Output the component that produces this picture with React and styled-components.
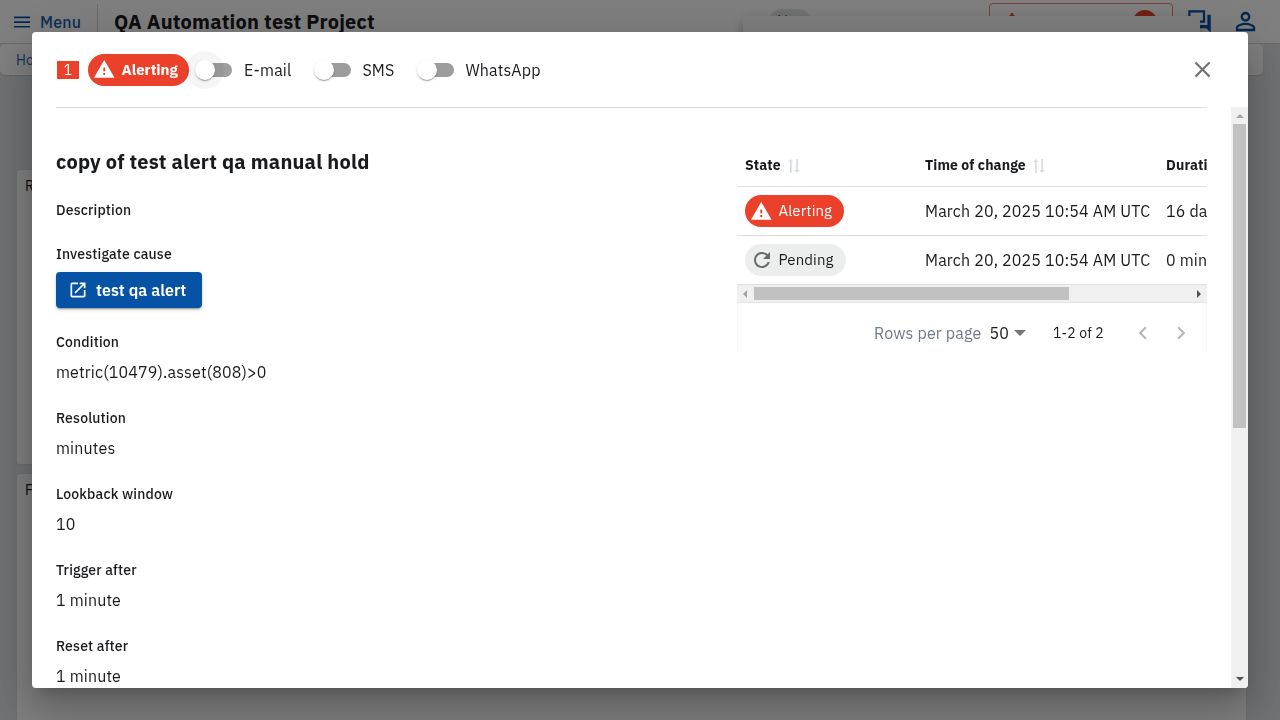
import React from "react";
import styled, { createGlobalStyle, css } from "styled-components";

const GlobalStyle = createGlobalStyle`
  *, *::before, *::after { box-sizing: border-box; }
  html, body { margin: 0; height: 100%; overflow: hidden; }
  body {
    font-family: "IBM Plex Sans", "Noto Sans", sans-serif;
    font-size: 16px;
    color: #191b1e;
    background: #dfe2e5;
  }
`;

const BLUE = "#0653a6";
const RED = "#eb412b";

const Text = styled.span`
  display: inline-block;
  white-space: nowrap;
  font-size: ${(p) => p.$size || 16}px;
  font-weight: ${(p) => p.$weight || 400};
  letter-spacing: ${(p) => p.$track ?? 0.15}px;
  line-height: 24px;
  color: ${(p) => p.$color || "inherit"};
`;

/* ---------- page behind the dialog ---------- */

const Page = styled.div`
  height: 720px;
  overflow: hidden;
`;

const TopBar = styled.header`
  display: flex;
  align-items: center;
  height: 44px;
  padding: 0 20px 0 14px;
  background: #fff;
  border-bottom: 1px solid #d4d7da;
`;

const MenuButton = styled.div`
  display: flex;
  align-items: center;
  gap: 10px;
  width: 83px;
  color: ${BLUE};
`;

const BarDivider = styled.div`
  align-self: stretch;
  width: 1px;
  margin: 4px 16px 0 0;
  background: #d4d7da;
`;

const BarRight = styled.div`
  display: flex;
  align-items: center;
  margin-left: auto;
  color: ${BLUE};
`;

const RangeChip = styled.div`
  display: flex;
  justify-content: center;
  width: 42px;
  height: 26px;
  margin-right: 9px;
  border-radius: 13px;
  background: #e4e6e7;
  color: #141a3a;
`;

const RangeText = styled.div`
  width: 169px;
  color: #5d6670;
`;

const NoticeButton = styled.div`
  display: flex;
  align-items: center;
  gap: 12px;
  width: 184px;
  height: 38px;
  padding: 0 15px;
  border: 1px solid #f08374;
  border-radius: 4px;
  color: ${RED};
`;

const CountBadge = styled.span`
  display: flex;
  align-items: center;
  justify-content: center;
  width: 24px;
  height: 24px;
  margin-left: auto;
  border-radius: 50%;
  background: ${RED};
  color: #fff;
`;

const BarIcon = styled.div`
  display: flex;
  margin-left: ${(p) => p.$gap}px;
`;

const Crumbs = styled.nav`
  display: flex;
  align-items: center;
  width: 1263px;
  height: 31px;
  padding-left: 16px;
  background: #fff;
  border-radius: 5px;
  box-shadow: 0 1px 2px rgba(0, 0, 0, 0.12);
  color: #1a6fb8;
`;

const CardStack = styled.main`
  display: flex;
  flex-direction: column;
  gap: 10px;
  width: 1229px;
  margin: 95px 0 0 17px;
`;

const Card = styled.section`
  height: 294px;
  padding: 4px 8px;
  background: #fff;
  border-radius: 2px;
  box-shadow: 0 0 1px rgba(0, 0, 0, 0.25);
`;

const Popover = styled.div`
  position: fixed;
  top: 16px;
  left: 743px;
  width: 457px;
  height: 560px;
  background: #fff;
  border-radius: 4px;
  box-shadow: 0 5px 5px -3px rgba(0, 0, 0, 0.2), 0 8px 10px 1px rgba(0, 0, 0, 0.14),
    0 3px 14px 2px rgba(0, 0, 0, 0.12);
`;

/* ---------- dialog ---------- */

const Backdrop = styled.div`
  position: fixed;
  inset: 0;
  padding: 32px;
  background: rgba(0, 0, 0, 0.5);
`;

const Dialog = styled.div`
  display: flex;
  flex-direction: column;
  height: 656px;
  overflow: hidden;
  background: #fff;
  border-radius: 4px;
  box-shadow: 0 11px 15px -7px rgba(0, 0, 0, 0.2), 0 24px 38px 3px rgba(0, 0, 0, 0.14),
    0 9px 46px 8px rgba(0, 0, 0, 0.12);
`;

const DialogHeader = styled.div`
  display: flex;
  align-items: center;
  flex: none;
  height: 76px;
  width: 1151px;
  margin-left: 24px;
  border-bottom: 1px solid #dfdfdf;
`;

const Priority = styled.div`
  display: flex;
  align-items: center;
  justify-content: center;
  width: 22px;
  height: 18px;
  margin: 0 9px 0 1px;
  background: ${RED};
  color: #fff;
`;

const Pill = styled.div`
  display: flex;
  align-items: center;
  width: ${(p) => p.$width}px;
  height: 32px;
  padding-left: 4.5px;
  gap: 5px;
  border-radius: 16px;
  ${(p) =>
    p.$tone === "alert"
      ? css`background: ${RED}; color: #fff;`
      : css`background: #eceeee; color: #1c1d20;`}
`;

const PillIcon = styled.span`
  display: flex;
  justify-content: center;
  align-items: center;
  width: 24px;
  height: 24px;
`;

const SwitchLabel = styled.label`
  display: flex;
  align-items: center;
  width: ${(p) => p.$width}px;
  margin-left: ${(p) => p.$offset || 0}px;
`;

const SwitchTrack = styled.span`
  display: flex;
  align-items: center;
  flex: none;
  width: 34px;
  height: 14px;
  margin: 0 ${(p) => (p.$focus ? 12 : 11.4)}px 0 12px;
  border-radius: 7px;
  background: #9d9d9d;
`;

const SwitchThumb = styled.span`
  flex: none;
  width: 20px;
  height: 20px;
  margin-left: -3px;
  border-radius: 50%;
  background: #fff;
  box-shadow: 0 0 0 ${(p) => (p.$focus ? 9 : 0)}px rgba(0, 0, 0, 0.04),
    0 2px 1px -1px rgba(0, 0, 0, 0.2), 0 1px 1px rgba(0, 0, 0, 0.14), 0 1px 3px rgba(0, 0, 0, 0.12);
`;

const CloseButton = styled.div`
  display: flex;
  margin: 0 -9px 0 auto;
  color: #757575;
`;

const DialogBody = styled.div`
  display: flex;
  flex: 1;
  min-height: 0;
  margin-top: -1px;
`;

const Content = styled.div`
  display: flex;
  flex: 1;
  justify-content: space-between;
  padding: 35px 24px 0;
  border-top: 1px solid transparent;
  margin-top: -1px;
  overflow: hidden;
`;

const Details = styled.div`
  flex: none;
  width: 480px;
`;

const DetailTitle = styled.h2`
  margin: 0;
  height: 56px;
  padding-top: 8px;
  font-size: inherit;
  font-weight: inherit;
`;

const Field = styled.div`
  display: flex;
  flex-direction: column;
  align-items: flex-start;
  height: ${(p) => p.$height || 76}px;
  gap: 6px;
`;

const CauseButton = styled.div`
  display: flex;
  align-items: center;
  gap: 8px;
  width: 146px;
  height: 36px;
  padding-left: 12px;
  border-radius: 4px;
  background: ${BLUE};
  color: #fff;
  box-shadow: 0 3px 1px -2px rgba(0, 0, 0, 0.2), 0 2px 2px rgba(0, 0, 0, 0.14),
    0 1px 5px rgba(0, 0, 0, 0.12);
`;

const History = styled.div`
  flex: none;
  width: 470px;
  overflow: hidden;
`;

const Row = styled.div`
  display: grid;
  grid-template-columns: 180px 241px 120px;
  align-items: center;
  height: ${(p) => (p.$head ? 45 : 49)}px;
  padding: ${(p) => (p.$head ? 2 : 0)}px 0 0 8px;
  border-bottom: 1px solid #dfdfdf;
`;

const HeadCell = styled.div`
  display: flex;
  align-items: center;
  gap: 7px;

  svg { margin-top: 2px; }
`;

const HScroll = styled.div`
  display: flex;
  align-items: center;
  justify-content: space-between;
  height: 18px;
  padding: 0 6px;
  background: #f0f0f0;
  border-bottom: 1px solid #e4e4e4;
`;

const HThumb = styled.div`
  width: 315px;
  height: 13px;
  margin: 0 auto 0 7px;
  background: #c1c1c1;
`;

const Pager = styled.div`
  display: flex;
  align-items: center;
  height: 50px;
  padding: 9px 11px 0 136px;
  border: solid #f8f8f8;
  border-width: 0 1px;
`;

const PagerItem = styled.div`
  display: flex;
  align-items: center;
  flex: none;
  width: ${(p) => p.$width}px;
`;

const PageArrow = styled.div`
  display: flex;
  flex: none;
  width: 38px;
  color: #b8b8b8;
`;

const VScroll = styled.div`
  display: flex;
  flex-direction: column;
  align-items: center;
  flex: none;
  width: 17px;
  padding: 7px 0;
  background: #f0f0f0;
`;

const VThumb = styled.div`
  width: 13px;
  height: 304px;
  margin: 6px 0 auto;
  background: #c1c1c1;
`;

/* ---------- drawings ---------- */

const Glyph = ({ size = 24, d }) => (
  <svg width={size} height={size} viewBox="0 0 24 24" fill="currentColor" fillRule="evenodd">
    <path d={d} />
  </svg>
);

const ICON = {
  warning: "M1 21h22L12 2 1 21zm12-3h-2v-2h2v2zm0-4h-2v-4h2v4z",
  refresh:
    "M17.65 6.35C16.2 4.9 14.21 4 12 4c-4.42 0-7.99 3.58-7.99 8s3.57 8 7.99 8c3.73 0 6.84-2.55 7.73-6h-2.08c-.82 2.33-3.04 4-5.65 4-3.31 0-6-2.69-6-6s2.69-6 6-6c1.66 0 3.14.69 4.22 1.78L13 11h7V4l-2.35 2.35z",
  open: "M19 19H5V5h7V3H5c-1.11 0-2 .9-2 2v14c0 1.1.89 2 2 2h14c1.1 0 2-.9 2-2v-7h-2v7zM14 3v2h3.59l-9.83 9.83 1.41 1.41L19 6.41V10h2V3h-7z",
  close:
    "M19 6.41L17.59 5 12 10.59 6.41 5 5 6.41 10.59 12 5 17.59 6.41 19 12 13.41 17.59 19 19 17.59 13.41 12z",
  left: "M15.41 7.41L14 6l-6 6 6 6 1.41-1.41L10.83 12z",
  right: "M10 6L8.59 7.41 13.17 12l-4.58 4.59L10 18l6-6z",
  chat: "M17 2H2v15l4-4h11zM15 4v7H5.2L4 12.2V4zM22 6h-3v9H6v3h12l4 4z",
  person:
    "M12 5.9c1.16 0 2.1.94 2.1 2.1s-.94 2.1-2.1 2.1S9.9 9.16 9.9 8s.94-2.1 2.1-2.1m0 9c2.97 0 6.1 1.46 6.1 2.1v1.1H5.9V17c0-.64 3.13-2.1 6.1-2.1M12 4C9.79 4 8 5.79 8 8s1.79 4 4 4 4-1.79 4-4-1.79-4-4-4zm0 9c-2.67 0-8 1.34-8 4v3h16v-3c0-2.66-5.33-4-8-4z",
};

const MenuLines = () => (
  <svg width="16" height="12" viewBox="0 0 16 12" fill="currentColor">
    <path d="M0 .5h16v1.700H0zM0 5.200h16v1.700H0zM0 9.900h16v1.700H0z" />
  </svg>
);

const BellIcon = () => (
  <svg width="14" height="18" viewBox="0 0 14 18" fill="currentColor">
    <path d="M7 0a1.4 1.4 0 0 0-1.4 1.4v.7A5 5 0 0 0 2 7v5L0 14v1h14v-1l-2-2V7a5 5 0 0 0-3.6-4.9v-.7A1.4 1.4 0 0 0 7 0zM5.3 16h3.4A1.7 1.7 0 0 1 5.3 16z" />
  </svg>
);

const SortIcon = () => (
  <svg width="12" height="14" viewBox="0 0 12 14" fill="#d9dde1">
    <path d="M2 14V3H.3L2.7 0l2.5 3H3.7v11zM8.2 0h1.8v11h2L9 14l-2.700-3h1.9z" />
  </svg>
);

const Arrow = ({ points, w, h, color }) => (
  <svg width={w} height={h} viewBox={`0 0 ${w} ${h}`}>
    <polygon points={points} fill={color} />
  </svg>
);

const Muted = styled.span`
  display: flex;
  color: #666a6a;
`;

/* ---------- content ---------- */

const StatusPill = ({ state, width, bold }) => (
  <Pill $width={width} $tone={state === "Alerting" ? "alert" : "idle"}>
    <PillIcon>
      {state === "Alerting" ? (
        <Glyph size={22.5} d={ICON.warning} />
      ) : (
        <Muted>
          <Glyph d={ICON.refresh} />
        </Muted>
      )}
    </PillIcon>
    <Text $size={15} $weight={bold ? 700 : 400} $track={bold ? -0.05 : 0.08}>
      {state}
    </Text>
  </Pill>
);

const Switch = ({ label, width, focus, offset }) => (
  <SwitchLabel $width={width} $offset={offset}>
    <SwitchTrack $focus={focus}>
      <SwitchThumb $focus={focus} />
    </SwitchTrack>
    <Text>{label}</Text>
  </SwitchLabel>
);

const Label = ({ children }) => (
  <Text $size={14} $weight={500} $track={0.16}>
    {children}
  </Text>
);

const FIELDS = [
  ["Condition", "metric(10479).asset(808)>0"],
  ["Resolution", "minutes"],
  ["Lookback window", "10"],
  ["Trigger after", "1 minute"],
  ["Reset after", "1 minute"],
];

const ROWS = [
  { state: "Alerting", width: 99, duration: "16 days" },
  { state: "Pending", width: 101, duration: "0 minutes" },
];

export default function App() {
  return (
    <>
      <GlobalStyle />
      <Page>
        <TopBar>
          <MenuButton>
            <MenuLines />
            <Text $weight={500} $color="#1560ae">Menu</Text>
          </MenuButton>
          <BarDivider />
          <Text $size={20} $weight={700} $track={0.22}>QA Automation test Project</Text>
          <BarRight>
            <RangeChip>
              <Text $size={14}>Live</Text>
            </RangeChip>
            <RangeText>
              <Text $size={14}>to April 5, 2025 02:30</Text>
            </RangeText>
            <NoticeButton>
              <BellIcon />
              <Text $size={14}>Notifications</Text>
              <CountBadge>
                <Text $size={14}>8</Text>
              </CountBadge>
            </NoticeButton>
            <BarIcon $gap={13}>
              <Glyph size={27} d={ICON.chat} />
            </BarIcon>
            <BarIcon $gap={18}>
              <Glyph size={29} d={ICON.person} />
            </BarIcon>
          </BarRight>
        </TopBar>
        <Crumbs>
          <Text $size={14}>Home</Text>
        </Crumbs>
        <CardStack>
          <Card>
            <Text $size={14}>R</Text>
          </Card>
          <Card>
            <Text $size={14}>F</Text>
          </Card>
        </CardStack>
      </Page>
      <Popover />
      <Backdrop>
        <Dialog>
          <DialogHeader>
            <Priority>
              <Text $size={14} $track={0}>1</Text>
            </Priority>
            <StatusPill state="Alerting" width={101} bold />
            <Switch label="E-mail" width={119} offset={-3} focus />
            <Switch label="SMS" width={103} />
            <Switch label="WhatsApp" width={150} />
            <CloseButton>
              <Glyph size={27} d={ICON.close} />
            </CloseButton>
          </DialogHeader>
          <DialogBody>
            <Content>
              <Details>
                <DetailTitle>
                  <Text $size={20} $weight={700} $track={0.19}>copy of test alert qa manual hold</Text>
                </DetailTitle>
                <Field $height={44}>
                  <Label>Description</Label>
                </Field>
                <Field $height={88}>
                  <Label>Investigate cause</Label>
                  <CauseButton>
                    <Glyph size={20} d={ICON.open} />
                    <Text $weight={600} $track={0.05}>test qa alert</Text>
                  </CauseButton>
                </Field>
                {FIELDS.map(([label, value]) => (
                  <Field key={label}>
                    <Label>{label}</Label>
                    <Text>{value}</Text>
                  </Field>
                ))}
              </Details>
              <History>
                <Row $head>
                  <HeadCell>
                    <Text $size={14} $weight={700}>State</Text>
                    <SortIcon />
                  </HeadCell>
                  <HeadCell>
                    <Text $size={14} $weight={700} $track={0.1}>Time of change</Text>
                    <SortIcon />
                  </HeadCell>
                  <Text $size={14} $weight={700}>Duration</Text>
                </Row>
                {ROWS.map((r) => (
                  <Row key={r.state}>
                    <StatusPill state={r.state} width={r.width} />
                    <Text>March 20, 2025 10:54 AM UTC</Text>
                    <Text>{r.duration}</Text>
                  </Row>
                ))}
                <HScroll>
                  <Arrow w={4} h={8} points="4,0 4,8 0,4" color="#a3a3a3" />
                  <HThumb />
                  <Arrow w={4} h={8} points="0,0 0,8 4,4" color="#505050" />
                </HScroll>
                <Pager>
                  <PagerItem $width={115.5}>
                    <Text $color="#6f7b88">Rows per page</Text>
                  </PagerItem>
                  <PagerItem $width={24.5}>
                    <Text>50</Text>
                  </PagerItem>
                  <PagerItem $width={39}>
                    <Arrow w={12} h={6} points="0,0 12,0 6,6" color="#757575" />
                  </PagerItem>
                  <PagerItem $width={77}>
                    <Text $size={14}>1-2 of 2</Text>
                  </PagerItem>
                  <PageArrow>
                    <Glyph size={26} d={ICON.left} />
                  </PageArrow>
                  <PageArrow>
                    <Glyph size={26} d={ICON.right} />
                  </PageArrow>
                </Pager>
              </History>
            </Content>
            <VScroll>
              <Arrow w={8} h={4} points="0,4 8,4 4,0" color="#a3a3a3" />
              <VThumb />
              <Arrow w={8} h={4} points="0,0 8,0 4,4" color="#505050" />
            </VScroll>
          </DialogBody>
        </Dialog>
      </Backdrop>
    </>
  );
}
